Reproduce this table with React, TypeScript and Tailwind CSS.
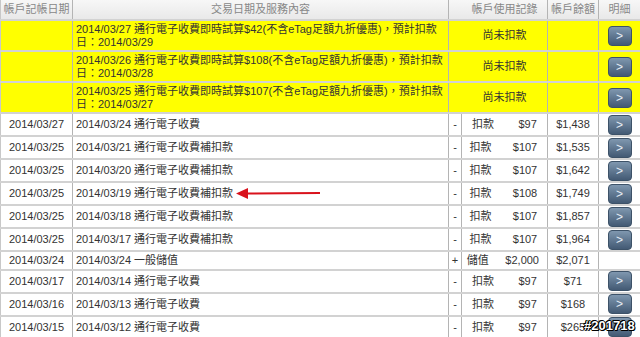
import React from 'react';

const font = { fontFamily: '"Liberation Sans", Arial, "Noto Sans CJK TC", sans-serif' };

type Row = {
  post: string;
  desc: string;
  sign: string;
  kind: string;
  amount: string;
  balance: string;
  btn: boolean;
};

const pending = [
  { desc: '2014/03/27 通行電子收費即時試算$42(不含eTag足額九折優惠)，預計扣款', due: '日：2014/03/29' },
  { desc: '2014/03/26 通行電子收費即時試算$108(不含eTag足額九折優惠)，預計扣款', due: '日：2014/03/28' },
  { desc: '2014/03/25 通行電子收費即時試算$107(不含eTag足額九折優惠)，預計扣款', due: '日：2014/03/27' },
];

const rows: Row[] = [
  { post: '2014/03/27', desc: '2014/03/24 通行電子收費', sign: '-', kind: '扣款', amount: '$97', balance: '$1,438', btn: true },
  { post: '2014/03/25', desc: '2014/03/21 通行電子收費補扣款', sign: '-', kind: '扣款', amount: '$107', balance: '$1,535', btn: true },
  { post: '2014/03/25', desc: '2014/03/20 通行電子收費補扣款', sign: '-', kind: '扣款', amount: '$107', balance: '$1,642', btn: true },
  { post: '2014/03/25', desc: '2014/03/19 通行電子收費補扣款', sign: '-', kind: '扣款', amount: '$108', balance: '$1,749', btn: true },
  { post: '2014/03/25', desc: '2014/03/18 通行電子收費補扣款', sign: '-', kind: '扣款', amount: '$107', balance: '$1,857', btn: true },
  { post: '2014/03/25', desc: '2014/03/17 通行電子收費補扣款', sign: '-', kind: '扣款', amount: '$107', balance: '$1,964', btn: true },
  { post: '2014/03/24', desc: '2014/03/24 一般儲值', sign: '+', kind: '儲值', amount: '$2,000', balance: '$2,071', btn: false },
  { post: '2014/03/17', desc: '2014/03/14 通行電子收費', sign: '-', kind: '扣款', amount: '$97', balance: '$71', btn: true },
  { post: '2014/03/16', desc: '2014/03/13 通行電子收費', sign: '-', kind: '扣款', amount: '$97', balance: '$168', btn: true },
  { post: '2014/03/15', desc: '2014/03/12 通行電子收費', sign: '-', kind: '扣款', amount: '$97', balance: '$265', btn: true },
];

function DetailButton() {
  return (
    <div className="mx-auto flex h-[20px] w-[24px] items-center justify-center rounded-[4px] border border-[#3d5268] bg-gradient-to-b from-[#7f97af] to-[#435a74] text-[12px] leading-none text-[#e6edf4]">
      &gt;
    </div>
  );
}

const cell = 'border-r border-b-2 border-r-[#b4b4b4] border-b-[#d2d2d2] p-0';

export default function App() {
  return (
    <div className="relative h-[337px] w-[640px] overflow-hidden bg-white text-[11px] text-[#333]" style={font}>
      <table className="w-[640px] table-fixed border-collapse">
        <colgroup>
          <col className="w-[72px]" />
          <col className="w-[376px]" />
          <col className="w-[13px]" />
          <col className="w-[86px]" />
          <col className="w-[51px]" />
          <col className="w-[42px]" />
        </colgroup>
        <thead>
          <tr className="h-[20px] bg-gradient-to-b from-[#f7f7f7] to-[#e8e8e8] text-[#888]">
            <th className={`${cell} border-l border-l-[#c8c8c8] font-normal`}>帳戶記帳日期</th>
            <th className={`${cell} font-normal`}>交易日期及服務內容</th>
            <th colSpan={2} className={`${cell} pl-[13px] font-normal`}>帳戶使用記錄</th>
            <th className={`${cell} font-normal`}>帳戶餘額</th>
            <th className={`${cell} font-normal`}>明細</th>
          </tr>
        </thead>
        <tbody>
          {pending.map((p, i) => (
            <tr key={i} className="h-[31px] bg-[#ffff00]">
              <td className={`${cell} border-l border-l-[#c8c8c8]`}></td>
              <td className={`${cell} overflow-hidden whitespace-nowrap px-[3px] leading-[13px]`}>
                {p.desc}
                <br />
                {p.due}
              </td>
              <td colSpan={2} className={`${cell} pl-[13px] text-center`}>尚未扣款</td>
              <td className={cell}></td>
              <td className={cell}>
                <DetailButton />
              </td>
            </tr>
          ))}
          {rows.map((r, i) => (
            <tr key={i} className={r.btn ? 'h-[23px]' : 'h-[17px]'}>
              <td className={`${cell} border-l border-l-[#c8c8c8] text-center`}>{r.post}</td>
              <td className={`${cell} overflow-hidden whitespace-nowrap px-[3px]`}>{r.desc}</td>
              <td className={`${cell} text-center`}>{r.sign}</td>
              <td className={cell}>
                <table className="w-full border-collapse">
                  <tbody>
                    <tr>
                      <td className="p-0 text-center">{r.kind}</td>
                      <td className="p-0 pl-[4px] text-center">{r.amount}</td>
                    </tr>
                  </tbody>
                </table>
              </td>
              <td className={`${cell} text-center`}>{r.balance}</td>
              <td className={cell}>{r.btn && <DetailButton />}</td>
            </tr>
          ))}
        </tbody>
      </table>

      {/* red arrow annotation */}
      <svg className="absolute left-[234px] top-[186px]" width="88" height="15" viewBox="0 0 88 15">
        <line x1="12" y1="7.5" x2="86" y2="7" stroke="#d9121c" strokeWidth="2" />
        <polygon points="2,7.5 14,2 14,13" fill="#d9121c" />
      </svg>

      {/* watermark */}
      <div className="absolute left-[584px] top-[319px] text-[13px] font-bold leading-none text-white [text-shadow:_-1px_0_#000,_1px_0_#000,_0_-1px_#000,_0_1px_#000,_1px_1px_#000,_-1px_-1px_#000]">
        #201718
      </div>
    </div>
  );
}
